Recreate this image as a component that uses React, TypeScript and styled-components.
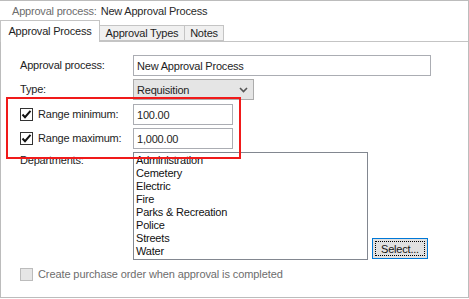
import React from "react";
import styled, { createGlobalStyle } from "styled-components";

const Global = createGlobalStyle`
  html, body { margin: 0; padding: 0; background: #fff; }
  body {
    font-family: "Liberation Sans", Arial, sans-serif;
    font-size: 11px;
    letter-spacing: -0.2px;
    color: #1e1e1e;
  }
  * { box-sizing: border-box; }
`;

const Frame = styled.div`
  width: 469px;
  height: 298px;
  display: flex;
  flex-direction: column;
  border-top: 1px solid #bcbcbc;
  border-right: 1px solid #bcbcbc;
  background: #fff;
`;

const Header = styled.div`
  height: 19px;
  display: flex;
  align-items: center;
  gap: 4px;
  padding-left: 12px;
`;

const HeaderLabel = styled.span`
  color: #6d6d6d;
`;

const HeaderValue = styled.span`
  color: #2a2a2a;
`;

const TabStrip = styled.div`
  height: 22px;
  display: flex;
  align-items: flex-end;
  border-bottom: 1px solid #c4c4c4;
`;

const Tab = styled.div<{ $active?: boolean; $w: number }>`
  width: ${(p) => p.$w}px;
  height: ${(p) => (p.$active ? 22 : 16)}px;
  margin-bottom: ${(p) => (p.$active ? -1 : 0)}px;
  margin-left: ${(p) => (p.$active ? 0 : -1)}px;
  display: flex;
  align-items: center;
  justify-content: center;
  padding-bottom: ${(p) => (p.$active ? 2 : 0)}px;
  background: ${(p) => (p.$active ? "#fff" : "#f0f0f0")};
  border: 1px solid #c4c4c4;
  border-bottom: ${(p) => (p.$active ? "none" : "1px solid #c4c4c4")};
  color: #1e1e1e;
  position: relative;
  z-index: ${(p) => (p.$active ? 1 : 0)};
`;

const Panel = styled.div`
  flex: 1;
  position: relative;
  border-left: 1px solid #bcbcbc;
  border-bottom: 1px solid #bcbcbc;
  padding: 13px 0 0 19px;
  display: flex;
  flex-direction: column;
`;

const Row = styled.div<{ $mt: number; $h?: number; $top?: boolean }>`
  display: flex;
  align-items: ${(p) => (p.$top ? "flex-start" : "center")};
  margin-top: ${(p) => p.$mt}px;
  height: ${(p) => (p.$h ? `${p.$h}px` : "auto")};
`;

const Label = styled.div<{ $pt?: number; $auto?: boolean }>`
  width: ${(p) => (p.$auto ? "auto" : "113px")};
  flex-shrink: 0;
  display: flex;
  align-items: center;
  gap: 5px;
  padding-top: ${(p) => p.$pt ?? 0}px;
  line-height: 13px;
`;

const TextBox = styled.input<{ $w: number }>`
  width: ${(p) => p.$w}px;
  height: 21px;
  border: 1px solid #abadb3;
  padding: 0 3px;
  margin: 0;
  font: inherit;
  letter-spacing: inherit;
  color: #1e1e1e;
  background: #fff;
  outline: none;
`;

const Combo = styled.div`
  width: 121px;
  height: 21px;
  border: 1px solid #acacac;
  background: #e5e5e5;
  display: flex;
  align-items: center;
  justify-content: space-between;
  padding: 0 5px 0 3px;
`;

const Box = styled.div<{ $disabled?: boolean }>`
  width: 13px;
  height: 13px;
  flex-shrink: 0;
  border: 1px solid ${(p) => (p.$disabled ? "#bcbcbc" : "#333")};
  background: ${(p) => (p.$disabled ? "#e6e6e6" : "#fff")};
  display: flex;
  align-items: center;
  justify-content: center;
`;

const ListBox = styled.div`
  width: 235px;
  height: 108px;
  border: 1px solid #828790;
  padding: 1px 2px;
  background: #fff;
  display: flex;
  flex-direction: column;
`;

const ListItem = styled.div`
  height: 13px;
  line-height: 13px;
  color: #111;
  white-space: nowrap;
`;

const Button = styled.div`
  align-self: flex-end;
  margin: 0 0 1px 4px;
  width: 56px;
  height: 21px;
  border: 1px solid #0078d7;
  background: #e1e1e1;
  display: flex;
  align-items: center;
  justify-content: center;
  position: relative;
  color: #111;
  &::after {
    content: "";
    position: absolute;
    inset: 2px;
    border: 1px dotted #000;
  }
`;

const DisabledText = styled.span`
  color: #6d6d6d;
  letter-spacing: -0.1px;
`;

const Highlight = styled.div`
  position: absolute;
  left: 5px;
  top: 55px;
  width: 235px;
  height: 62px;
  border: 2px solid #f01a1a;
  pointer-events: none;
`;

const Check = () => (
  <svg width="11" height="11" viewBox="0 0 11 11">
    <path d="M1.5 5.5 L4 8.2 L9.5 1.8" fill="none" stroke="#111" strokeWidth="2" />
  </svg>
);

const Chevron = () => (
  <svg width="9" height="6" viewBox="0 0 9 6">
    <path d="M1 1 L4.5 4.5 L8 1" fill="none" stroke="#555" strokeWidth="1.6" />
  </svg>
);

const departments = [
  "Administration",
  "Cemetery",
  "Electric",
  "Fire",
  "Parks & Recreation",
  "Police",
  "Streets",
  "Water",
];

export default function App() {
  return (
    <>
      <Global />
      <Frame>
        <Header>
          <HeaderLabel>Approval process:</HeaderLabel>
          <HeaderValue>New Approval Process</HeaderValue>
        </Header>
        <TabStrip>
          <Tab $active $w={100}>Approval Process</Tab>
          <Tab $w={86}>Approval Types</Tab>
          <Tab $w={40}>Notes</Tab>
        </TabStrip>
        <Panel>
          <Row $mt={0} $h={21}>
            <Label>Approval process:</Label>
            <TextBox $w={298} readOnly value="New Approval Process" />
          </Row>
          <Row $mt={3} $h={21}>
            <Label>Type:</Label>
            <Combo>
              <span>Requisition</span>
              <Chevron />
            </Combo>
          </Row>
          <Row $mt={4} $h={21}>
            <Label>
              <Box><Check /></Box>
              <span>Range minimum:</span>
            </Label>
            <TextBox $w={100} readOnly value="100.00" />
          </Row>
          <Row $mt={3} $h={21}>
            <Label>
              <Box><Check /></Box>
              <span>Range maximum:</span>
            </Label>
            <TextBox $w={100} readOnly value="1,000.00" />
          </Row>
          <Row $mt={3} $top>
            <Label $pt={2}>Departments:</Label>
            <ListBox>
              {departments.map((d) => (
                <ListItem key={d}>{d}</ListItem>
              ))}
            </ListBox>
            <Button>Select...</Button>
          </Row>
          <Row $mt={8} $h={13}>
            <Label $auto>
              <Box $disabled />
              <DisabledText>Create purchase order when approval is completed</DisabledText>
            </Label>
          </Row>
          <Highlight />
        </Panel>
      </Frame>
    </>
  );
}
